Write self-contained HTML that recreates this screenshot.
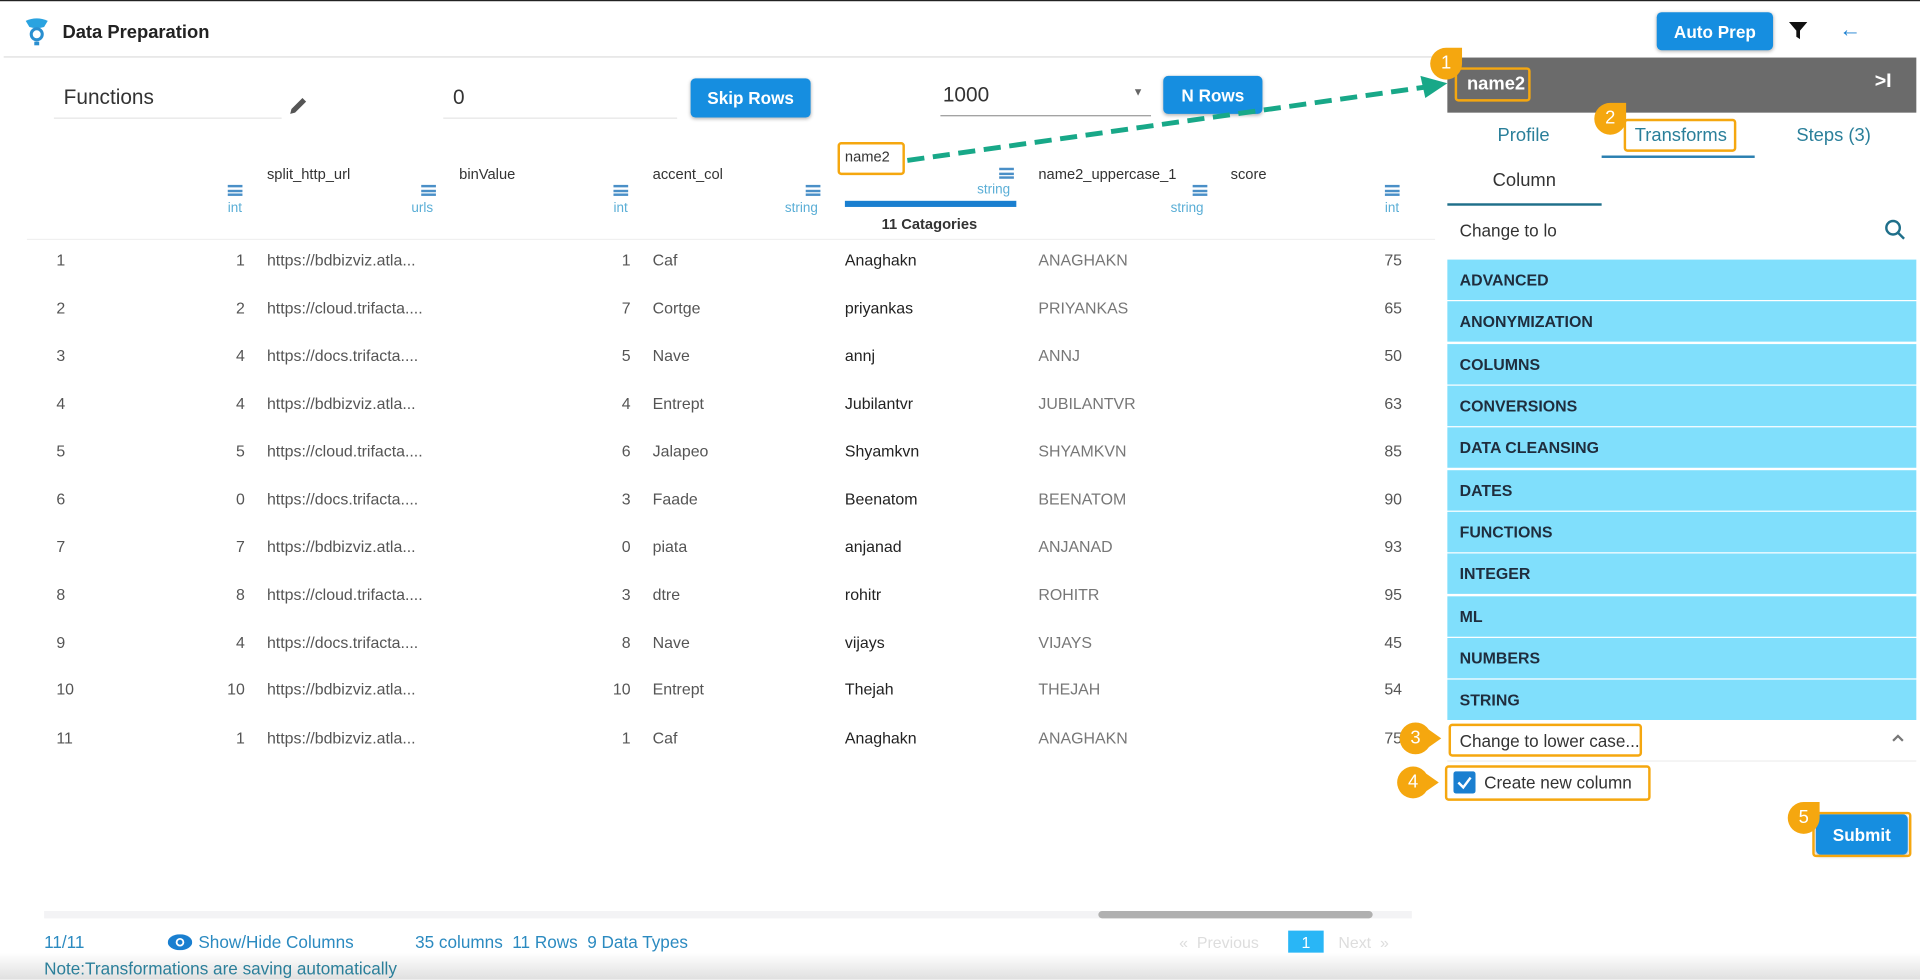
<!DOCTYPE html>
<html><head><meta charset="utf-8"><style>
*{margin:0;padding:0;box-sizing:border-box}
html,body{width:1920px;height:979px;overflow:hidden;background:#fff;font-family:"Liberation Sans",sans-serif}
#w{position:absolute;left:0;top:0;width:1568px;height:800px;transform:scale(1.22449);transform-origin:0 0}
.a{position:absolute;white-space:nowrap}
.t{font-size:13px;color:#555}
.btn{position:absolute;background:#168ee0;color:#fff;font-size:14px;font-weight:bold;border-radius:4px;display:flex;align-items:center;justify-content:center;box-shadow:0 1px 3px rgba(0,0,0,.3)}
.ham{position:absolute;width:12px;height:9px;border-top:2px solid #4a8fc7;border-bottom:2px solid #4a8fc7}
.ham:after{content:"";position:absolute;left:0;right:0;top:1.5px;height:2px;background:#4a8fc7}
.ty{position:absolute;font-size:11px;color:#5aaed6}
.li{position:absolute;left:1182px;width:383px;height:33px;background:#80dffc;font-size:13px;font-weight:bold;color:#1f2d3d;padding-left:10px;line-height:33px}
.c{position:absolute;width:26px;height:26px;border-radius:50% 0 50% 50%;background:#f5a70f;color:#fff;font-size:15px;text-align:center;line-height:26px;transform:rotate(0deg)}
.c.r{border-radius:50% 50% 50% 50%}
.c.r:after{content:"";position:absolute;right:-8px;top:6px;border-left:10px solid #f5a70f;border-top:7px solid transparent;border-bottom:7px solid transparent}
.bx{position:absolute;border:2px solid #f5a70f;border-radius:3px}
</style></head><body><div id="w">
<div style="position:absolute;left:0;top:0;width:1568px;height:1px;background:#222"></div>
<svg class="a" style="left:19px;top:14px" width="22" height="24" viewBox="0 0 22 24"><path d="M2 3 Q11 -1 20 3 L17 8 Q11 10 5 8Z" fill="#2aa3e0"/><circle cx="11" cy="14" r="4.5" fill="none" stroke="#2a8fd0" stroke-width="2.5"/><rect x="9" y="20" width="4" height="3" fill="#2a8fd0"/></svg>
<div class="a" style="left:51px;top:18px;font-size:15px;font-weight:bold;color:#222">Data Preparation</div>
<div style="position:absolute;left:3px;top:46px;width:1178px;height:1px;background:#ddd"></div>
<div class="btn" style="left:1353px;top:10px;width:95px;height:31px">Auto Prep</div>
<svg class="a" style="left:1461px;top:18px" width="15" height="15" viewBox="0 0 15 15"><path d="M0 0H15L9 7V14L6 12V7Z" fill="#111"/></svg>
<div class="a" style="left:1502px;top:14px;font-size:18px;color:#1a7fd0">←</div>

<div class="a" style="left:52px;top:70px;font-size:17px;color:#333">Functions</div>
<div style="position:absolute;left:44px;top:96px;width:186px;height:1px;background:#e5e5e5"></div>
<svg class="a" style="left:234px;top:76px" width="20" height="20" viewBox="0 0 20 20"><path d="M3 17L4 13L13 4L16 7L7 16Z" fill="#555"/></svg>
<div class="a" style="left:370px;top:70px;font-size:17px;color:#333">0</div>
<div style="position:absolute;left:362px;top:96px;width:191px;height:1px;background:#e5e5e5"></div>
<div class="btn" style="left:564px;top:64px;width:98px;height:32px">Skip Rows</div>
<div class="a" style="left:770px;top:68px;font-size:17px;color:#333">1000</div>
<div class="a" style="left:925px;top:70px;font-size:9px;color:#666">▼</div>
<div style="position:absolute;left:768px;top:94px;width:172px;height:1px;background:#999"></div>
<div class="btn" style="left:950px;top:62px;width:81px;height:31px">N Rows</div>

<div class="a t" style="left:218px;top:135px;font-size:12px;color:#333">split_http_url</div>
<div class="a t" style="left:375px;top:135px;font-size:12px;color:#333">binValue</div>
<div class="a t" style="left:533px;top:135px;font-size:12px;color:#333">accent_col</div>
<div class="a t" style="left:690px;top:121px;font-size:12px;color:#333">name2</div>
<div class="a t" style="left:848px;top:135px;font-size:12px;color:#333">name2_uppercase_1</div>
<div class="a t" style="left:1005px;top:135px;font-size:12px;color:#333">score</div>
<div class="ham" style="left:186px;top:151px"></div><div class="ty" style="left:186px;top:164px">int</div>
<div class="ham" style="left:344px;top:151px"></div><div class="ty" style="left:336px;top:164px">urls</div>
<div class="ham" style="left:501px;top:151px"></div><div class="ty" style="left:501px;top:164px">int</div>
<div class="ham" style="left:658px;top:151px"></div><div class="ty" style="left:641px;top:164px">string</div>
<div class="ham" style="left:816px;top:137px"></div><div class="ty" style="left:798px;top:149px">string</div>
<div class="ham" style="left:974px;top:151px"></div><div class="ty" style="left:956px;top:164px">string</div>
<div class="ham" style="left:1131px;top:151px"></div><div class="ty" style="left:1131px;top:164px">int</div>
<div style="position:absolute;left:690px;top:164px;width:140px;height:5px;background:#1a7fd0"></div>
<div class="a" style="left:720px;top:176px;font-size:12px;font-weight:bold;color:#333">11 Catagories</div>
<div style="position:absolute;left:22px;top:195px;width:1150px;height:1px;background:#f0f0f0"></div>

<div id="rows"></div>
<script>
var d=[[1,"bdbizviz.atla...",1,"Caf","Anaghakn",75],[2,"cloud.trifacta....",7,"Cortge","priyankas",65],[4,"docs.trifacta....",5,"Nave","annj",50],[4,"bdbizviz.atla...",4,"Entrept","Jubilantvr",63],[5,"cloud.trifacta....",6,"Jalapeo","Shyamkvn",85],[0,"docs.trifacta....",3,"Faade","Beenatom",90],[7,"bdbizviz.atla...",0,"piata","anjanad",93],[8,"cloud.trifacta....",3,"dtre","rohitr",95],[4,"docs.trifacta....",8,"Nave","vijays",45],[10,"bdbizviz.atla...",10,"Entrept","Thejah",54],[1,"bdbizviz.atla...",1,"Caf","Anaghakn",75]];
var ys=[213,252,291,330,369,408,447,486,525,563,603],h="";
d.forEach(function(r,i){var y=ys[i]-8;
h+='<div class="a t" style="left:46px;top:'+y+'px">'+(i+1)+'</div>';
h+='<div class="a t" style="left:150px;width:50px;text-align:right;top:'+y+'px">'+r[0]+'</div>';
h+='<div class="a t" style="left:218px;top:'+y+'px">https://'+r[1]+'</div>';
h+='<div class="a t" style="left:465px;width:50px;text-align:right;top:'+y+'px">'+r[2]+'</div>';
h+='<div class="a t" style="left:533px;top:'+y+'px">'+r[3]+'</div>';
h+='<div class="a t" style="left:690px;color:#222;top:'+y+'px">'+r[4]+'</div>';
h+='<div class="a t" style="left:848px;color:#777;top:'+y+'px">'+r[4].toUpperCase()+'</div>';
h+='<div class="a t" style="left:1095px;width:50px;text-align:right;top:'+y+'px">'+r[5]+'</div>';});
document.getElementById("rows").innerHTML=h;
</script>

<div style="position:absolute;left:36px;top:744px;width:1117px;height:6px;background:#f3f3f5"></div>
<div style="position:absolute;left:897px;top:744px;width:224px;height:6px;background:#b0b0b0;border-radius:3px"></div>
<div class="a" style="left:36px;top:761px;font-size:14px;color:#2b8ac0">11/11</div>
<svg class="a" style="left:137px;top:763px" width="20" height="13" viewBox="0 0 20 13"><ellipse cx="10" cy="6.5" rx="10" ry="6.5" fill="#1a7fd0"/><circle cx="10" cy="6.5" r="3.5" fill="#fff"/><circle cx="10" cy="6.5" r="2" fill="#1a7fd0"/></svg>
<div class="a" style="left:162px;top:761px;font-size:14px;color:#2b8ac0">Show/Hide Columns</div>
<div class="a" style="left:339px;top:761px;font-size:14px;color:#2b8ac0">35 columns&nbsp; 11 Rows&nbsp; 9 Data Types</div>
<div class="a" style="left:963px;top:762px;font-size:13px;color:#ddd">« &nbsp;Previous</div>
<div style="position:absolute;left:1052px;top:760px;width:29px;height:20px;background:#29b6f6;color:#fff;font-size:13px;text-align:center;line-height:20px">1</div>
<div class="a" style="left:1093px;top:762px;font-size:13px;color:#ddd">Next &nbsp;»</div>
<div style="position:absolute;left:0;top:778px;width:1568px;height:22px;background:linear-gradient(#fff,#e0e0e0)"></div>
<div class="a" style="left:36px;top:783px;font-size:14px;color:#2b7f9a">Note:Transformations are saving automatically</div>

<div style="position:absolute;left:1182px;top:47px;width:383px;height:45px;background:#6b6b6b"></div>
<div class="a" style="left:1198px;top:60px;font-size:15px;font-weight:bold;color:#fff">name2</div>
<div class="a" style="left:1531px;top:58px;font-size:16px;font-weight:bold;color:#fff">&gt;I</div>
<div class="a" style="left:1223px;top:102px;font-size:15px;color:#2a7f9a">Profile</div>
<div class="a" style="left:1335px;top:102px;font-size:15px;color:#2a7f9a">Transforms</div>
<div style="position:absolute;left:1308px;top:127px;width:125px;height:2px;background:#2a7fb0"></div>
<div class="a" style="left:1467px;top:102px;font-size:15px;color:#2a7f9a">Steps (3)</div>
<div class="a" style="left:1219px;top:139px;font-size:15px;color:#333">Column</div>
<div style="position:absolute;left:1182px;top:166px;width:126px;height:2px;background:#1f6f8a"></div>
<div class="a" style="left:1192px;top:180px;font-size:14px;color:#333">Change to lo</div>
<svg class="a" style="left:1539px;top:179px" width="18" height="18" viewBox="0 0 18 18"><circle cx="7" cy="7" r="5.5" fill="none" stroke="#1f6f8a" stroke-width="2"/><path d="M11 11L16 16" stroke="#1f6f8a" stroke-width="2"/></svg>
<div class="li" style="top:212px">ADVANCED</div>
<div class="li" style="top:246px">ANONYMIZATION</div>
<div class="li" style="top:281px">COLUMNS</div>
<div class="li" style="top:315px">CONVERSIONS</div>
<div class="li" style="top:349px">DATA CLEANSING</div>
<div class="li" style="top:384px">DATES</div>
<div class="li" style="top:418px">FUNCTIONS</div>
<div class="li" style="top:452px">INTEGER</div>
<div class="li" style="top:487px">ML</div>
<div class="li" style="top:521px">NUMBERS</div>
<div class="li" style="top:555px">STRING</div>
<div class="a" style="left:1192px;top:597px;font-size:14px;color:#333">Change to lower case...</div>
<svg class="a" style="left:1545px;top:599px" width="10" height="7" viewBox="0 0 10 7"><path d="M1 6L5 2L9 6" fill="none" stroke="#777" stroke-width="1.8"/></svg>
<div style="position:absolute;left:1182px;top:621px;width:383px;height:1px;background:#eee"></div>
<div style="position:absolute;left:1187px;top:630px;width:18px;height:18px;background:#1a7fd0;border-radius:2px"></div>
<svg class="a" style="left:1189px;top:632px" width="14" height="14" viewBox="0 0 14 14"><path d="M2 7L6 11L12 3" fill="none" stroke="#fff" stroke-width="2"/></svg>
<div class="a" style="left:1212px;top:631px;font-size:14px;color:#333">Create new column</div>
<div class="btn" style="left:1483px;top:665px;width:75px;height:33px">Submit</div>

<div class="bx" style="left:684px;top:116px;width:55px;height:27px"></div>
<div class="bx" style="left:1188px;top:55px;width:62px;height:28px"></div>
<div class="bx" style="left:1326px;top:97px;width:92px;height:27px"></div>
<div class="bx" style="left:1183px;top:591px;width:158px;height:27px"></div>
<div class="bx" style="left:1180px;top:625px;width:168px;height:29px"></div>
<div class="bx" style="left:1480px;top:663px;width:81px;height:37px"></div>
<div class="c" style="left:1168px;top:39px">1</div>
<div class="c" style="left:1302px;top:84px">2</div>
<div class="c r" style="left:1143px;top:590px">3</div>
<div class="c r" style="left:1141px;top:626px">4</div>
<div class="c" style="left:1460px;top:655px">5</div>
<svg class="a" style="left:0;top:0" width="1568" height="800"><line x1="741" y1="131" x2="1165" y2="71" stroke="#18a888" stroke-width="4" stroke-dasharray="14,7"/><path d="M1182 68L1160 62L1164 80Z" fill="#18a888"/></svg>
</div></body></html>
